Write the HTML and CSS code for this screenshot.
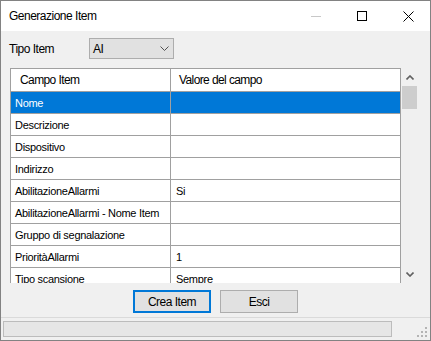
FILE: index.html
```html
<!doctype html>
<html lang="it">

<head>
  <title>Generazione Item</title>
  <link rel="stylesheet" href="styles.css">
</head>

<body>
  <div class="window">
    <div class="titlebar">
      <span class="title">Generazione Item</span>
      <div class="caption-buttons">
        <span class="cap-btn">
          <svg width="10" height="10"><line x1="0" y1="5.5" x2="10" y2="5.5" stroke="#c8c8c8" /></svg>
        </span>
        <span class="cap-btn">
          <svg width="10" height="10"><rect x="0.5" y="0.5" width="9" height="9" fill="none" stroke="#000" /></svg>
        </span>
        <span class="cap-btn">
          <svg width="11" height="11"><path d="M0.5 0.5 L10.5 10.5 M10.5 0.5 L0.5 10.5" stroke="#000" stroke-width="1" /></svg>
        </span>
      </div>
    </div>

    <div class="content">
      <div class="type-row">
        <label class="type-label">Tipo Item</label>
        <div class="combo">
          <span>AI</span>
          <svg width="9" height="5"><polyline points="0.5,0.5 4.5,4.5 8.5,0.5" fill="none" stroke="#505050" /></svg>
        </div>
      </div>

      <div class="grid-wrap">
        <div class="grid">
          <div class="row header">
            <div class="cell c1">Campo Item</div>
            <div class="cell c2">Valore del campo</div>
          </div>
          <div class="row selected">
            <div class="cell c1">Nome</div>
            <div class="cell c2"></div>
          </div>
          <div class="row">
            <div class="cell c1">Descrizione</div>
            <div class="cell c2"></div>
          </div>
          <div class="row">
            <div class="cell c1">Dispositivo</div>
            <div class="cell c2"></div>
          </div>
          <div class="row">
            <div class="cell c1">Indirizzo</div>
            <div class="cell c2"></div>
          </div>
          <div class="row">
            <div class="cell c1">AbilitazioneAllarmi</div>
            <div class="cell c2">Si</div>
          </div>
          <div class="row">
            <div class="cell c1">AbilitazioneAllarmi - Nome Item</div>
            <div class="cell c2"></div>
          </div>
          <div class="row">
            <div class="cell c1">Gruppo di segnalazione</div>
            <div class="cell c2"></div>
          </div>
          <div class="row">
            <div class="cell c1">PrioritàAllarmi</div>
            <div class="cell c2">1</div>
          </div>
          <div class="row">
            <div class="cell c1">Tipo scansione</div>
            <div class="cell c2">Sempre</div>
          </div>
        </div>
        <div class="scrollbar">
          <div class="sb-arrow up">
            <svg width="8" height="5"><polyline points="0.5,4.5 4,1 7.5,4.5" fill="none" stroke="#606060" stroke-width="1.6" /></svg>
          </div>
          <div class="sb-thumb"></div>
          <div class="sb-arrow down">
            <svg width="8" height="5"><polyline points="0.5,0.5 4,4 7.5,0.5" fill="none" stroke="#606060" stroke-width="1.6" /></svg>
          </div>
        </div>
      </div>

      <div class="buttons">
        <button class="btn default" type="button">Crea Item</button>
        <button class="btn" type="button">Esci</button>
      </div>
    </div>

    <div class="statusbar">
      <div class="progress"></div>
      <svg class="grip" width="11" height="11">
        <rect x="8" y="0" width="2" height="2" fill="#b4b4b4" />
        <rect x="4" y="4" width="2" height="2" fill="#b4b4b4" />
        <rect x="8" y="4" width="2" height="2" fill="#b4b4b4" />
        <rect x="0" y="8" width="2" height="2" fill="#b4b4b4" />
        <rect x="4" y="8" width="2" height="2" fill="#b4b4b4" />
        <rect x="8" y="8" width="2" height="2" fill="#b4b4b4" />
      </svg>
    </div>
  </div>
</body>

</html>
```

FILE: styles.css
```css
body {
  margin: 0;
  font-family: "Liberation Sans", Arial, sans-serif;
  color: #000;
}

.window {
  width: 431px;
  height: 341px;
  box-sizing: border-box;
  border: 1px solid #828282;
  background-color: #f0f0f0;
  display: flex;
  flex-direction: column;
  overflow: hidden;
}

/* title bar */
.titlebar {
  height: 30px;
  flex: none;
  background-color: #fff;
  display: flex;
  align-items: center;
}

.title {
  flex: 1;
  padding-left: 8px;
  font-size: 12px;
  letter-spacing: -0.5px;
}

.caption-buttons {
  display: flex;
  height: 100%;
  margin-right: -1px;
}

.cap-btn {
  width: 46px;
  display: flex;
  align-items: center;
  justify-content: center;
}

.cap-btn svg {
  display: block;
}

/* main area */
.content {
  flex: 1;
  padding: 7px 12px 0 8px;
}

.type-row {
  display: flex;
  align-items: center;
  height: 21px;
}

.type-label {
  width: 80px;
  font-size: 12px;
  letter-spacing: -0.5px;
}

.combo {
  width: 85px;
  height: 21px;
  box-sizing: border-box;
  border: 1px solid #adadad;
  background-color: #e1e1e1;
  display: flex;
  align-items: center;
  justify-content: space-between;
  padding: 0 4px 0 3px;
  font-size: 12px;
  letter-spacing: -0.5px;
}

.combo svg {
  display: block;
}

/* data grid */
.grid-wrap {
  display: flex;
  height: 215px;
  margin-top: 9px;
  margin-left: 1px;
}

.grid {
  width: 391px;
  box-sizing: border-box;
  border: 1px solid #a0a0a0;
  border-bottom: none;
  background-color: #fff;
  overflow: hidden;
}

.row {
  display: flex;
  height: 22px;
  box-sizing: border-box;
  border-bottom: 1px solid #a0a0a0;
  font-size: 11px;
  letter-spacing: -0.3px;
}

.row.header {
  height: 23px;
  font-size: 12px;
  letter-spacing: -0.6px;
}

.row.selected {
  background-color: #0078d7;
  color: #fff;
}

.cell {
  display: flex;
  align-items: center;
  white-space: nowrap;
}

.c1 {
  width: 160px;
  box-sizing: border-box;
  border-right: 1px solid #a0a0a0;
  padding-left: 4px;
}

.c2 {
  flex: 1;
  padding-left: 5px;
}

.header .c1 {
  padding-left: 9px;
}

.header .c2 {
  padding-left: 8px;
}

.scrollbar {
  width: 17px;
  display: flex;
  flex-direction: column;
}

.sb-arrow {
  height: 17px;
  display: flex;
  align-items: center;
  justify-content: center;
}

.sb-arrow.up {
  height: 18px;
}

.sb-arrow.down {
  margin-top: auto;
}

.sb-arrow svg {
  display: block;
}

.sb-thumb {
  width: 15px;
  height: 23px;
  margin-left: 1px;
  background-color: #cdcdcd;
}

/* buttons */
.buttons {
  display: flex;
  justify-content: center;
  gap: 9px;
  margin-top: 7px;
  padding-left: 4px;
}

.btn {
  width: 78px;
  height: 23px;
  border: 1px solid #adadad;
  background-color: #e1e1e1;
  font-family: "Liberation Sans", Arial, sans-serif;
  font-size: 12px;
  letter-spacing: -0.5px;
  color: #000;
  padding: 0;
}

.btn.default {
  border: 2px solid #0078d7;
}

/* status bar */
.statusbar {
  height: 23px;
  flex: none;
  box-sizing: border-box;
  border-top: 1px solid #dadada;
  display: flex;
  align-items: flex-start;
  justify-content: space-between;
  padding: 3px 2px 0 2px;
}

.progress {
  width: 389px;
  height: 16px;
  box-sizing: border-box;
  border: 1px solid #bcbcbc;
  background-color: #e6e6e6;
}

.grip {
  margin-top: 6px;
  display: block;
}
```
